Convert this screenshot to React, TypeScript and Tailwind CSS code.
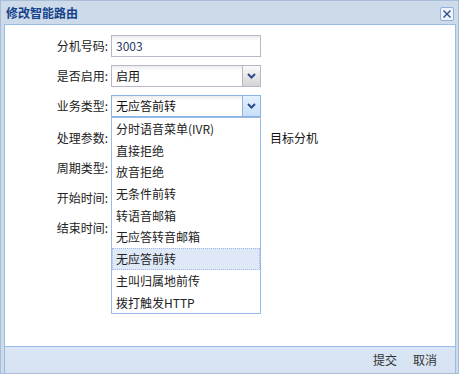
import React from "react";

const font = { fontFamily: '"Noto Sans CJK SC", "Noto Sans", sans-serif' };

function Arrow() {
  return (
    <svg width="9" height="6" viewBox="0 0 9 6">
      <polyline points="1,1 4.5,4.5 8,1" fill="none" stroke="#2d4a8a" strokeWidth="2" />
    </svg>
  );
}

function Label({ children }: { children: React.ReactNode }) {
  return <div className="w-[103px] text-right text-[12px] text-[#222] leading-[22px]">{children}</div>;
}

const items = [
  "分时语音菜单(IVR)",
  "直接拒绝",
  "放音拒绝",
  "无条件前转",
  "转语音邮箱",
  "无应答转音邮箱",
  "无应答前转",
  "主叫归属地前传",
  "拨打触发HTTP",
];

export default function App() {
  return (
    <div className="w-[459px] h-[374px] bg-[#cddae9] border border-[#a9bdd6] flex flex-col" style={font}>
      <div className="h-[23px] flex items-center justify-between pl-[5px] pr-[4px]">
        <div className="text-[12px] font-bold text-[#15428b] leading-none">修改智能路由</div>
        <div className="w-[14px] h-[14px] mt-[2px] border border-[#8fb0de] rounded-[2px] bg-[#eef4fc] flex items-center justify-center">
          <svg width="10" height="10" viewBox="0 0 10 10">
            <path d="M1.5 1.5 L8.5 8.5 M8.5 1.5 L1.5 8.5" stroke="#2d4a8a" strokeWidth="1.4" />
          </svg>
        </div>
      </div>
      <div className="flex-1 ml-[3px] mr-[2px] border-l border-r border-t border-[#99bbe8] flex flex-col">
        <div className="flex-1 bg-white relative pt-[10px] flex flex-col gap-[8px]">
          <div className="flex items-center">
            <Label>分机号码:</Label>
            <div className="ml-[3px] w-[150px] h-[22px] border border-[#b5b8c8] bg-[linear-gradient(#ececec,#ffffff_5px)] px-[4px] text-[12px] leading-[20px] text-[#2a3a6a]">
              3003
            </div>
          </div>
          <div className="flex items-center">
            <Label>是否启用:</Label>
            <div className="ml-[3px] w-[150px] h-[22px] border border-[#b5b8c8] flex">
              <div className="flex-1 bg-[linear-gradient(#ececec,#ffffff_5px)] px-[4px] text-[12px] leading-[20px] text-[#111]">启用</div>
              <div className="w-[18px] border-l border-[#b5b8c8] bg-[linear-gradient(#fafafa,#d4d4d4)] flex items-center justify-center">
                <Arrow />
              </div>
            </div>
          </div>
          <div className="flex items-center">
            <Label>业务类型:</Label>
            <div className="ml-[3px] w-[150px] h-[22px] border border-[#8db2e3] flex">
              <div className="flex-1 bg-[linear-gradient(#ececec,#ffffff_5px)] px-[4px] text-[12px] leading-[20px] text-[#111]">无应答前转</div>
              <div className="w-[18px] border-l border-[#8db2e3] bg-[linear-gradient(#e4f0fd,#c6dff9)] flex items-center justify-center">
                <Arrow />
              </div>
            </div>
          </div>
          <div className="flex items-center mt-[2px]">
            <Label>处理参数:</Label>
            <div className="ml-[3px] w-[150px] h-[22px]" />
            <div className="ml-[9px] text-[12px] text-[#111] leading-[22px]">目标分机</div>
          </div>
          <div className="flex items-center">
            <Label>周期类型:</Label>
          </div>
          <div className="flex items-center">
            <Label>开始时间:</Label>
          </div>
          <div className="flex items-center">
            <Label>结束时间:</Label>
          </div>

          <div className="absolute left-[106px] top-[92px] w-[150px] border border-[#99bbe8] bg-white py-0">
            {items.map((t) => (
              <div
                key={t}
                className={
                  "h-[21.7px] px-[3px] text-[12px] leading-[20px] text-[#222] whitespace-nowrap border " +
                  (t === "无应答前转" ? "bg-[#dfe8f6] border-dotted border-[#a3bae9]" : "border-transparent")
                }
              >
                {t}
              </div>
            ))}
          </div>
        </div>
        <div className="h-[27px] border-t border-[#99bbe8] bg-[linear-gradient(#dbe6f4,#d6e2f2)] flex items-center justify-end pr-[18px] gap-[16px] text-[12px] text-[#333]">
          <span>提交</span>
          <span>取消</span>
        </div>
      </div>
    </div>
  );
}
